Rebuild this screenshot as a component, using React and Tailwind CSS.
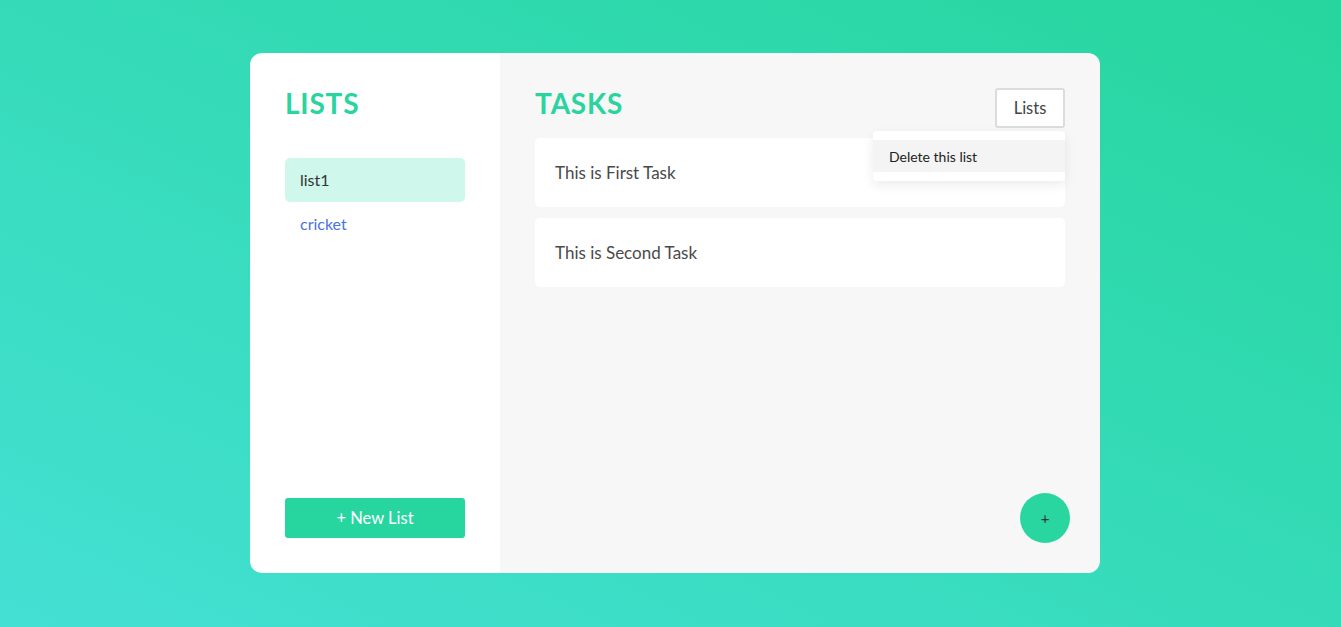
import React from 'react';

export default function App() {
  const lists = [
    { id: 1, name: 'list1', active: true },
    { id: 2, name: 'cricket', active: false },
  ];
  const tasks = ['This is First Task', 'This is Second Task'];

  return (
    <div
      className="min-h-screen w-full flex items-start justify-center pt-[53px] pl-[9px] bg-[linear-gradient(to_top_right,#44e0d4,#26d69d)]"
      style={{ fontFamily: '"Lato", "Open Sans", sans-serif' }}
    >
      <div className="w-[850px] h-[520px] flex rounded-xl overflow-hidden">
        {/* Sidebar */}
        <div className="w-[250px] bg-white flex flex-col px-[35px] pt-[30px] pb-[35px]">
          <h1 className="text-[28px] font-bold tracking-[0.8px] text-[#2ad4a0] leading-[40px]">LISTS</h1>
          <ul className="mt-[35px] flex flex-col gap-[1px]">
            {lists.map((l) => (
              <li
                key={l.id}
                className={
                  l.active
                    ? 'h-[44px] flex items-center px-[15px] rounded-[5px] bg-[#cff7ec] text-[#333] text-[16px]'
                    : 'h-[42px] flex items-center px-[15px] rounded-[5px] text-[#4b72e0] text-[16px]'
                }
              >
                {l.name}
              </li>
            ))}
          </ul>
          <button className="mt-auto h-[40px] w-full rounded-[3px] bg-[#27d69f] text-white text-[16.5px]">
            + New List
          </button>
        </div>

        {/* Main */}
        <div className="relative flex-1 bg-[#f7f7f7] px-[35px] pt-[30px]">
          <div className="flex justify-between items-start">
            <h1 className="text-[28px] font-bold tracking-[0.8px] text-[#2ad4a0] leading-[40px]">TASKS</h1>
            <div className="relative mt-[5px]">
              <button className="h-[40px] w-[70px] bg-white border-2 border-[#dcdcdc] rounded-[3px] text-[16.5px] text-[#444]">
                Lists
              </button>
              <div className="absolute right-0 top-[43px] w-[192px] z-10 bg-white rounded-[4px] shadow-[0_4px_12px_rgba(0,0,0,0.08)] py-[9px]">
                <div className="h-[32px] flex items-center px-[16px] bg-[#f4f4f4] text-[14px] text-[#222]">
                  Delete this list
                </div>
              </div>
            </div>
          </div>

          <div className="mt-[10px] flex flex-col gap-[11px]">
            {tasks.map((t) => (
              <div key={t} className="h-[69px] bg-white rounded-[5px] flex items-center px-[20px] text-[17px] text-[#4a4a4a]">
                {t}
              </div>
            ))}
          </div>

          <button className="absolute right-[30px] bottom-[30px] w-[50px] h-[50px] rounded-full bg-[#2ad6a0] text-[#333] text-[15px] flex items-center justify-center">
            +
          </button>
        </div>
      </div>
    </div>
  );
}
